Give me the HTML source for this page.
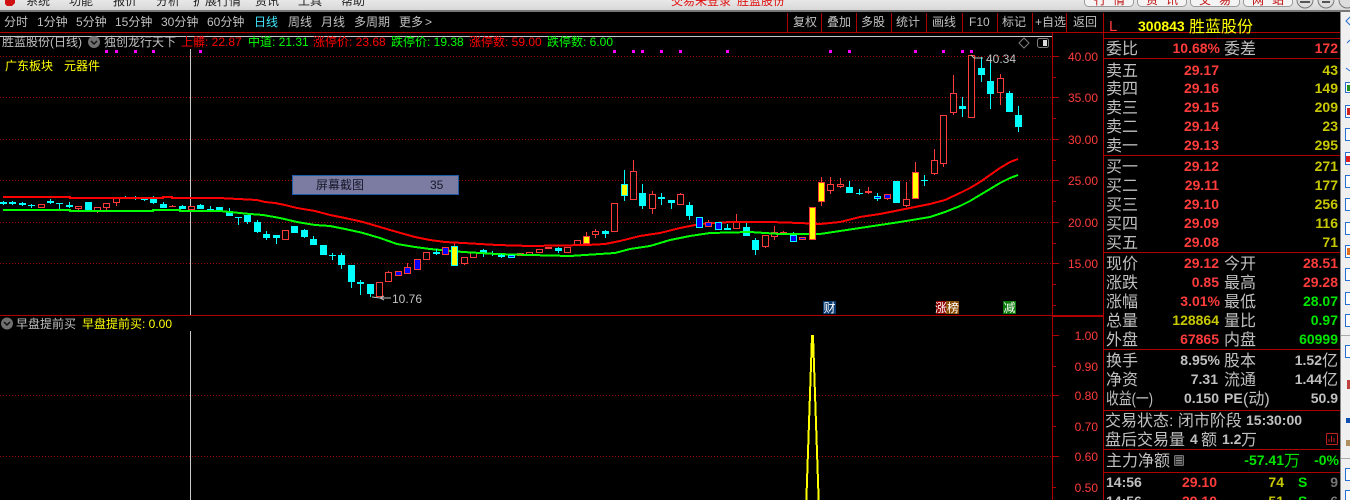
<!DOCTYPE html>
<html><head><meta charset="utf-8"><style>
html,body{margin:0;padding:0;background:#000;width:1350px;height:500px;overflow:hidden}
svg{display:block}
text{font-family:"Liberation Sans","WenQuanYi Zen Hei","Noto Sans CJK SC",sans-serif}
.m{font-size:12px;fill:#222}
.t{font-size:12px;fill:#c0c0c0}
.a{font-size:12px;fill:#ff3c3c;text-anchor:end}
.l{font-size:16px;fill:#c0c0c0}
.n{font-size:14px;font-weight:bold;fill:#ff3c3c;text-anchor:end}
.y{fill:#c8c800}.g{fill:#00e600}.w{fill:#c0c0c0}
.s{font-size:12px}
</style></head><body>
<svg width="1350" height="500" viewBox="0 0 1350 500" xmlns="http://www.w3.org/2000/svg">
<rect width="1350" height="500" fill="#000"/>
<!-- title bar -->
<defs><linearGradient id="tb" x1="0" y1="0" x2="0" y2="1"><stop offset="0" stop-color="#e8e8e8"/><stop offset="1" stop-color="#d8d8d8"/></linearGradient></defs>
<rect width="1350" height="10" fill="url(#tb)"/>
<rect y="10" width="1350" height="2" fill="#777"/>
<path d="M5 0h10v3l-3 3H7L5 4z" fill="#d01010"/>
<g class="m">
<text x="26" y="5" class="m">系统</text><text x="69" y="5" class="m">功能</text><text x="113" y="5" class="m">报价</text><text x="156" y="5" class="m">分析</text><text x="193" y="5" class="m">扩展行情</text><text x="255" y="5" class="m">资讯</text><text x="298" y="5" class="m">工具</text><text x="341" y="5" class="m">帮助</text>
</g>
<text x="671" y="5" font-size="12" fill="#e01010">交易未登录</text><text x="737" y="5" font-size="12" fill="#e01010">胜蓝股份</text>
<g fill="#f4f4f4" stroke="#999">
<rect x="1084.5" y="-6.5" width="49" height="13" rx="4"/><rect x="1137.5" y="-6.5" width="49" height="13" rx="4"/><rect x="1190.5" y="-6.5" width="49" height="13" rx="4"/><rect x="1243.5" y="-6.5" width="49" height="13" rx="4"/>
</g>
<g font-size="12" fill="#c01010"><text x="1094" y="4">行</text><text x="1113" y="4">情</text><text x="1146" y="4">资</text><text x="1166" y="4">讯</text><text x="1199" y="4">交</text><text x="1219" y="4">易</text><text x="1252" y="4">网</text><text x="1272" y="4">站</text></g>
<g fill="#ddd" stroke="#777"><circle cx="1305" cy="0" r="8"/><circle cx="1326" cy="0" r="8"/><circle cx="1347" cy="0" r="8"/></g>
<path d="M1300 2h10M1322 2h8" stroke="#555" stroke-width="2"/>

<!-- toolbar -->
<g class="t">
<text x="4" y="26" class="t">分时</text><text x="37" y="26" class="t">1分钟</text><text x="76" y="26" class="t">5分钟</text><text x="115" y="26" class="t">15分钟</text><text x="161" y="26" class="t">30分钟</text><text x="207" y="26" class="t">60分钟</text><text x="254" y="26" style="font-size:12px;fill:#40e8ff">日线</text><text x="288" y="26" class="t">周线</text><text x="321" y="26" class="t">月线</text><text x="354" y="26" class="t">多周期</text><text x="399" y="26" class="t">更多</text><text x="425" y="26" class="t">&gt;</text>
<text x="793" y="26" class="t">复权</text><text x="827" y="26" class="t">叠加</text><text x="861" y="26" class="t">多股</text><text x="896" y="26" class="t">统计</text><text x="932" y="26" class="t">画线</text><text x="969" y="26" class="t">F10</text><text x="1002" y="26" class="t">标记</text><text x="1035" y="26" class="t">+自选</text><text x="1073" y="26" class="t">返回</text>
</g>
<path d="M787.5 13V32M821.5 13V32M856.5 13V32M891.5 13V32M926.5 13V32M962.5 13V32M997.5 13V32M1032.5 13V32M1066.5 13V32M1103.5 13V500" stroke="#b00000" fill="none" shape-rendering="crispEdges"/>
<rect y="32" width="1341" height="1" fill="#b00000"/>
<rect y="36" width="1052" height="1" fill="#c8c8c8"/>

<!-- dotted grids -->
<g stroke="#a00000" stroke-dasharray="1 2" shape-rendering="crispEdges">
<path d="M0 56.5H1052M0 97.5H1052M0 139.5H1052M0 180.5H1052M0 222.5H1052M0 263.5H1052M0 395.5H1052M0 456.5H1052"/>
</g>
<!-- magenta dots -->
<path fill="#ff00ff" d="M105 50h3v3h-3zM115 50h3v3h-3zM134 50h3v3h-3zM152 50h3v3h-3zM199 50h3v3h-3zM613 50h3v3h-3zM632 50h3v3h-3zM641 50h3v3h-3zM660 50h3v3h-3zM679 50h3v3h-3zM726 50h3v3h-3zM829 50h3v3h-3zM848 50h3v3h-3zM914 50h3v3h-3zM942 50h3v3h-3zM961 50h3v3h-3zM970 50h3v3h-3z"/>
<!-- crosshair -->
<path d="M190.5 49V316M190.5 331V500" stroke="#c8c8c8" shape-rendering="crispEdges"/>

<g shape-rendering="crispEdges">
<!-- cyan wicks -->
<path fill="none" stroke="#00ffff" d="M3.5 201V205M12.5 201V205M22.5 202V206M31.5 204V208M50.5 199V204M59.5 203V209M69.5 202V208M125.5 196V199M135.5 196V200M144.5 199V201M153.5 196V204M163.5 202V208M182.5 205V209M200.5 204V209M210.5 206V212M229.5 208V216M238.5 217V225M247.5 215V224M257.5 220V233M266.5 231V240M276.5 235V244M304.5 229V238M313.5 236V245M332.5 253V260M341.5 253V269M351.5 265V288M360.5 280V295M370.5 284V297M483.5 249V257M492.5 251V256M558.5 247V253M605.5 230V238M624.5 170V201M642.5 184V209M661.5 193V205M671.5 200V209M689.5 202V220M727.5 224V229M746.5 223V236M755.5 238V255M793.5 232V236M859.5 189V195M849.5 181V193M877.5 193V201M924.5 175V186M962.5 97V117M981.5 57V82M990.5 58V109M1009.5 91V112M1018.5 106V132"/>
<!-- red wicks -->
<path fill="none" stroke="#ff3c3c" d="M78.5 209V210M97.5 212V213M106.5 208V210M116.5 203V206M172.5 205V207M388.5 271V272M407.5 263V267M464.5 264V265M586.5 232V236M595.5 229V238M633.5 160V171M652.5 191V214M680.5 193V194M708.5 220V222M736.5 214V222M765.5 247V248M774.5 226V240M783.5 231V234M830.5 177V194M840.5 178V188M868.5 187V194M887.5 198V200M906.5 182V207M915.5 162V172M934.5 149V175M943.5 164V167M953.5 75V115M1000.5 74V105M821.5 177V206M454.5 243V246"/>
<!-- cyan bodies -->
<path fill="#00ffff" d="M0 202h7v2h-7zM9 202h7v2h-7zM19 203h7v2h-7zM28 205h7v1h-7zM47 201h7v2h-7zM56 203h7v1h-7zM66 205h7v2h-7zM85 202h7v8h-7zM141 199h7v1h-7zM150 199h7v4h-7zM160 204h7v4h-7zM179 206h7v3h-7zM197 205h7v4h-7zM207 209h7v1h-7zM216 207h7v4h-7zM226 211h7v5h-7zM235 217h7v1h-7zM244 215h7v7h-7zM254 222h7v10h-7zM263 234h7v4h-7zM273 235h7v3h-7zM291 226h7v7h-7zM301 230h7v7h-7zM310 239h7v6h-7zM320 245h7v10h-7zM329 255h7v1h-7zM338 255h7v10h-7zM348 265h7v17h-7zM357 282h7v2h-7zM367 284h7v10h-7zM480 250h7v3h-7zM489 253h7v1h-7zM555 248h7v3h-7zM602 231h7v3h-7zM639 193h7v13h-7zM658 197h7v2h-7zM668 200h7v3h-7zM686 205h7v11h-7zM743 227h7v9h-7zM752 240h7v10h-7zM846 187h7v6h-7zM856 193h7v1h-7zM893 181h7v22h-7zM921 180h7v1h-7zM959 106h7v3h-7zM978 68h7v7h-7zM987 81h7v13h-7zM1006 93h7v19h-7zM1015 115h7v12h-7z"/>
<!-- red hollow -->
<path fill="#000" stroke="#ff3c3c" d="M38.5 204.500h6v3h-6zM75.500 206.500h6v2h-6zM94.500 207.500h6v4h-6zM103.500 203.500h6v4h-6zM113.500 198.500h6v4h-6zM188.500 206.500h6v3h-6zM282.500 230.500h6v9h-6zM376.500 282.500h6v14h-6zM385.500 272.500h6v9h-6zM423.500 252.500h6v7h-6zM461.500 257.500h6v6h-6zM470.500 252.500h6v5h-6zM526.500 252.500h6v3h-6zM536.500 249.500h6v3h-6zM564.500 247.500h6v5h-6zM574.500 240.500h6v4h-6zM592.500 231.500h6v3h-6zM611.500 203.500h6v28h-6zM630.500 171.500h6v28h-6zM649.500 194.500h6v14h-6zM677.500 194.500h6v10h-6zM733.500 222.500h6v6h-6zM762.500 235.500h6v11h-6zM771.500 232.500h6v4h-6zM827.500 184.500h6v6h-6zM837.500 184.500h6v2h-6zM903.500 199.500h6v6h-6zM931.500 160.500h6v13h-6zM940.500 115.500h6v48h-6zM950.500 93.500h6v19h-6zM968.500 55.500h6v62h-6zM997.500 78.500h6v14h-6z"/>
<!-- red solid -->
<path fill="#ff3c3c" d="M169 206h7v1h-7zM517 253h7v3h-7zM545 247h7v2h-7zM780 232h7v1h-7zM865 191h7v2h-7z"/>
</g>

<!-- MA lines -->
<polyline fill="none" stroke="#ff0000" stroke-width="2" shape-rendering="crispEdges" points="3,197 70,197 70,198 163,198 163,197 172,197 172,198 219,198 238,199 257,200 265,202 275,203 285,205 297,208 315,211 330,215 345,218 363,222 380,227 397,232 415,237 430,240 445,242 463,243 497,245 530,246 587,245 605,244 620,241 640,236 660,233 680,228 690,226 700,224 730,222 770,222 800,223 820,224 840,222 860,217 880,214 900,210 930,204 945,200 960,193 970,188 980,182 990,175 1000,168 1010,162 1018,159"/>
<polyline fill="none" stroke="#00ff00" stroke-width="2" shape-rendering="crispEdges" points="3,210 70,210 70,211 153,211 153,210 180,210 180,211 220,211 230,212 250,214 263,215 280,218 297,222 315,225 330,226 345,229 363,233 380,238 397,244 415,247 430,249 463,252 497,254 530,255 570,256 600,254 615,253 630,249 650,246 670,240 690,236 710,233 750,232 780,234 820,234 840,231 860,228 880,225 900,222 930,217 945,212 960,206 970,201 980,195 990,189 1000,183 1010,178 1018,175"/>

<!-- overlays blue / yellow -->
<g shape-rendering="crispEdges" stroke-width="1">
<path fill="none" stroke="#00ffff" d="M436.500 249V255M501.500 254V258"/>
<g fill="#0000ff" stroke="#ff3c3c">
<rect x="395.500" y="271.500" width="6" height="4"/><rect x="404.500" y="267.500" width="6" height="6"/><rect x="414.500" y="259.500" width="6" height="10"/><rect x="442.500" y="247.500" width="6" height="7"/><rect x="705.500" y="222.500" width="6" height="4"/><rect x="799.500" y="237.500" width="6" height="2"/><rect x="884.500" y="194.500" width="6" height="4"/>
</g>
<g fill="#0000ff" stroke="#00ffff">
<rect x="433.500" y="252.500" width="6" height="1"/><rect x="498.500" y="255.500" width="6" height="1"/><rect x="508.500" y="255.500" width="6" height="2"/><rect x="696.500" y="217.500" width="6" height="10"/><rect x="715.500" y="222.500" width="6" height="7"/><rect x="724.500" y="228.500" width="6" height="1"/><rect x="790.500" y="235.500" width="6" height="6"/><rect x="874.500" y="196.500" width="6" height="2"/>
</g>
<g fill="#ffff00" stroke="#ff3c3c">
<rect x="583.500" y="236.500" width="6" height="7"/><rect x="809.500" y="207.500" width="6" height="32"/><rect x="818.500" y="182.500" width="6" height="19"/><rect x="912.500" y="172.500" width="6" height="26"/>
</g>
<g fill="#ffff00" stroke="#00ffff">
<rect x="451.500" y="246.500" width="6" height="19"/><rect x="621.500" y="184.500" width="6" height="11"/>
</g>
</g>

<!-- price labels -->
<path d="M372 297l8 1M380 298h11M380 298l4-2M380 298l4 2" stroke="#c0c0c0" fill="none"/>
<text x="392" y="303" font-size="12" fill="#c0c0c0">10.76</text>
<path d="M971 55l3 3h9" stroke="#c0c0c0" fill="none"/>
<text x="986" y="63" font-size="12" fill="#c0c0c0">40.34</text>

<!-- legend -->
<text x="2" y="46" class="t">胜蓝股份(日线)</text>
<circle cx="94" cy="42" r="6" fill="#707070"/><path d="M91 41l3 3 3-3" stroke="#111" stroke-width="1.500" fill="none"/>
<text x="104" y="46" class="t">独创龙行天下</text>
<text x="181" y="46" font-size="12" fill="#ff0000">上髒: 22.87</text>
<text x="248" y="46" font-size="12" fill="#00ff00">中道: 21.31</text>
<text x="313" y="46" font-size="12" fill="#ff0000">涨停价: 23.68</text>
<text x="391" y="46" font-size="12" fill="#00ff00">跌停价: 19.38</text>
<text x="469" y="46" font-size="12" fill="#ff0000">涨停数: 59.00</text>
<text x="547" y="46" font-size="12" fill="#00ff00">跌停数: 6.00</text>
<text x="5" y="70" font-size="12" fill="#ffff00">广东板块</text>
<text x="64" y="70" font-size="12" fill="#ffff00">元器件</text>
<path d="M1024 38l5 5-5 5-5-5z" stroke="#808080" fill="none"/>
<rect x="1037.500" y="38.500" width="11" height="9" rx="2" stroke="#808080" fill="none"/><rect x="1043" y="40" width="4" height="6" fill="#ddd"/>

<!-- tooltip -->
<rect x="292.500" y="175.500" width="166" height="19" fill="#7c7ca2" stroke="#1a5ca8"/>
<text x="316" y="189" font-size="12" fill="#161628">屏幕截图</text>
<text x="430" y="189" font-size="12" fill="#161628">35</text>

<!-- axes -->
<rect x="1052" y="33" width="1" height="467" fill="#b00000"/>
<rect y="315" width="1103" height="1" fill="#b00000"/>
<rect x="1053" y="316" width="50" height="1" fill="#b00000"/>
<path stroke="#b00000" shape-rendering="crispEdges" d="M1053 56.500h6M1053 77.500h3M1053 97.500h6M1053 118.500h3M1053 139.500h6M1053 160.500h3M1053 180.500h6M1053 201.500h3M1053 222.500h6M1053 243.500h3M1053 263.500h6M1053 284.500h3M1053 305.500h3M1053 335.500h6M1053 366.500h3M1053 395.500h6M1053 426.500h3M1053 456.500h6M1053 487.500h3"/>
<g class="a">
<text x="1098" y="61" class="a">40.00</text><text x="1098" y="102" class="a">35.00</text><text x="1098" y="144" class="a">30.00</text><text x="1098" y="185" class="a">25.00</text><text x="1098" y="227" class="a">20.00</text><text x="1098" y="268" class="a">15.00</text>
<text x="1098" y="340" class="a">1.00</text><text x="1098" y="371" class="a">0.90</text><text x="1098" y="400" class="a">0.80</text><text x="1098" y="431" class="a">0.70</text><text x="1098" y="461" class="a">0.60</text><text x="1098" y="492" class="a">0.50</text>
</g>

<!-- event marks -->
<rect x="823" y="301" width="13" height="13" fill="#0a3a70"/><text x="823.500" y="312" font-size="12" fill="#fff">财</text>
<rect x="936" y="301" width="10" height="13" fill="#900000"/><rect x="946" y="301" width="13" height="13" fill="#8a4a00"/><text x="935" y="312" font-size="12" fill="#fff">涨</text><text x="947" y="312" font-size="12" fill="#fff">榜</text>
<rect x="1003" y="301" width="13" height="13" fill="#0a7a0a"/><text x="1003.500" y="312" font-size="12" fill="#fff">减</text>

<!-- lower pane -->
<circle cx="7" cy="323.500" r="6" fill="#707070"/><path d="M4 322l3 3 3-3" stroke="#111" stroke-width="1.500" fill="none"/>
<text x="16" y="328" class="t">早盘提前买</text>
<text x="82" y="328" font-size="12" fill="#ffff00">早盘提前买: 0.00</text>
<polyline fill="none" stroke="#ffff00" stroke-width="2" shape-rendering="crispEdges" points="806,510 812,336 813,336 819,510"/>

<!-- right panel -->
<text x="1109" y="31" font-size="15" fill="#ff3c3c">L</text>
<text x="1138" y="31" font-size="14" font-weight="bold" fill="#ffff00">300843</text>
<text x="1189" y="32" font-size="16" fill="#ffff00">胜蓝股份</text>
<path stroke="#b00000" stroke-width="1" shape-rendering="crispEdges" d="M1103 38.500H1341M1103 58.500H1341M1103 155.500H1341M1103 252.500H1341M1103 349.500H1341M1103 410.500H1341M1103 449.500H1341M1103 472.500H1341"/>
<text x="1106" y="54" class="l">委比</text><text x="1220" y="53" class="n">10.68%</text><text x="1224" y="54" class="l">委差</text><text x="1338" y="53" class="n">172</text>

<text x="1106" y="76" class="l">卖五</text><text x="1219" y="75" class="n">29.17</text><text x="1338" y="75" class="n y">43</text>
<text x="1106" y="94" class="l">卖四</text><text x="1219" y="93" class="n">29.16</text><text x="1338" y="93" class="n y">149</text>
<text x="1106" y="113" class="l">卖三</text><text x="1219" y="112" class="n">29.15</text><text x="1338" y="112" class="n y">209</text>
<text x="1106" y="132" class="l">卖二</text><text x="1219" y="131" class="n">29.14</text><text x="1338" y="131" class="n y">23</text>
<text x="1106" y="151" class="l">卖一</text><text x="1219" y="150" class="n">29.13</text><text x="1338" y="150" class="n y">295</text>

<text x="1106" y="172" class="l">买一</text><text x="1219" y="171" class="n">29.12</text><text x="1338" y="171" class="n y">271</text>
<text x="1106" y="191" class="l">买二</text><text x="1219" y="190" class="n">29.11</text><text x="1338" y="190" class="n y">177</text>
<text x="1106" y="210" class="l">买三</text><text x="1219" y="209" class="n">29.10</text><text x="1338" y="209" class="n y">256</text>
<text x="1106" y="229" class="l">买四</text><text x="1219" y="228" class="n">29.09</text><text x="1338" y="228" class="n y">116</text>
<text x="1106" y="248" class="l">买五</text><text x="1219" y="247" class="n">29.08</text><text x="1338" y="247" class="n y">71</text>

<text x="1106" y="269" class="l">现价</text><text x="1219" y="268" class="n">29.12</text><text x="1224" y="269" class="l">今开</text><text x="1338" y="268" class="n">28.51</text>
<text x="1106" y="288" class="l">涨跌</text><text x="1219" y="287" class="n">0.85</text><text x="1224" y="288" class="l">最高</text><text x="1338" y="287" class="n">29.28</text>
<text x="1106" y="307" class="l">涨幅</text><text x="1220" y="306" class="n">3.01%</text><text x="1224" y="307" class="l">最低</text><text x="1338" y="306" class="n g">28.07</text>
<text x="1106" y="326" class="l">总量</text><text x="1219" y="325" class="n y">128864</text><text x="1224" y="326" class="l">量比</text><text x="1338" y="325" class="n g">0.97</text>
<text x="1106" y="345" class="l">外盘</text><text x="1219" y="344" class="n">67865</text><text x="1224" y="345" class="l">内盘</text><text x="1338" y="344" class="n g">60999</text>

<text x="1106" y="366" class="l">换手</text><text x="1220" y="365" class="n w">8.95%</text><text x="1224" y="366" class="l">股本</text><text x="1322" y="365" class="n w">1.52</text><text x="1322" y="366" class="l">亿</text>
<text x="1106" y="385" class="l">净资</text><text x="1218" y="384" class="n w">7.31</text><text x="1224" y="385" class="l">流通</text><text x="1322" y="384" class="n w">1.44</text><text x="1322" y="385" class="l">亿</text>
<text x="1106" y="404" class="l" textLength="47" lengthAdjust="spacingAndGlyphs">收益(一)</text><text x="1219" y="403" class="n w">0.150</text><text x="1224" y="403" style="font-size:14px;font-weight:bold;fill:#c0c0c0">PE</text><text x="1243" y="404" class="l">(动)</text><text x="1338" y="403" class="n w">50.9</text>

<text x="1105" y="426" class="l">交易状态: 闭市阶段</text><text x="1246" y="425" font-size="14" font-weight="bold" fill="#c0c0c0">15:30:00</text>
<text x="1105" y="445" class="l">盘后交易量</text><text x="1190" y="444" font-size="14" font-weight="bold" fill="#c0c0c0">4</text><text x="1201" y="445" class="l">额</text><text x="1222" y="444" font-size="14" font-weight="bold" fill="#c0c0c0">1.2</text><text x="1241" y="445" class="l">万</text>
<rect x="1326.500" y="433.500" width="11" height="11" rx="1" fill="none" stroke="#c02020"/><path d="M1329 442v-3M1331.500 442v-6M1334 442v-4" stroke="#c02020"/>
<text x="1106" y="466" class="l">主力净额</text>
<rect x="1174.500" y="455.500" width="9" height="10" rx="1" fill="#333" stroke="#777"/><path d="M1176 458h6M1176 460.500h6M1176 463h6" stroke="#999"/>
<text x="1284" y="465" class="n g">-57.41</text><text x="1284" y="466" font-size="16" fill="#00e600">万</text><text x="1339" y="465" class="n g">-0%</text>

<text x="1106" y="487" font-size="14" font-weight="bold" fill="#c0c0c0">14:56</text><text x="1217" y="487" class="n">29.10</text><text x="1284" y="487" class="n y">74</text><text x="1298" y="487" font-size="14" font-weight="bold" fill="#00e600">S</text><text x="1338" y="487" class="n" style="fill:#777">9</text>
<text x="1106" y="506" font-size="14" font-weight="bold" fill="#c0c0c0">14:56</text><text x="1217" y="506" class="n">29.10</text><text x="1284" y="506" class="n y">51</text><text x="1298" y="506" font-size="14" font-weight="bold" fill="#00e600">S</text><text x="1338" y="506" class="n" style="fill:#777">6</text>

<!-- right strip -->
<rect x="1340" y="12" width="1" height="488" fill="#888"/>
<rect x="1341" y="12" width="9" height="488" fill="#f0f0f0"/>
<g fill="#fff" stroke="#2a6fd0" shape-rendering="crispEdges">
<rect x="1345.500" y="82.500" width="8" height="10"/><rect x="1345.500" y="105.500" width="8" height="12"/><rect x="1345.500" y="128.500" width="8" height="12"/><rect x="1345.500" y="152.500" width="8" height="12"/><rect x="1345.500" y="175.500" width="8" height="12"/><rect x="1345.500" y="198.500" width="8" height="12"/><rect x="1345.500" y="222.500" width="8" height="12"/><rect x="1345.500" y="245.500" width="8" height="12"/><rect x="1345.500" y="268.500" width="8" height="12"/><rect x="1345.500" y="292.500" width="8" height="12"/><rect x="1345.500" y="314.500" width="8" height="12"/><rect x="1345.500" y="345.500" width="8" height="12"/><rect x="1345.500" y="468.500" width="8" height="12"/><rect x="1345.500" y="490.500" width="8" height="12"/>
</g>
<path d="M1350 17l-4 4 4 4M1350 40l-3 3M1346 68l4 3" stroke="#2a6fd0" fill="none"/>
<rect x="1341" y="335" width="9" height="1" fill="#aaa"/><rect x="1341" y="458" width="9" height="1" fill="#aaa"/>
<rect x="1347" y="85" width="3" height="6" fill="#209020"/><rect x="1347" y="108" width="3" height="7" fill="#d02020"/><rect x="1346" y="156" width="4" height="6" fill="#e02020"/><rect x="1347" y="248" width="3" height="7" fill="#e07020"/>
<rect x="1347" y="380" width="3" height="9" fill="#c04040"/><rect x="1346" y="418" width="4" height="5" fill="#1050b0"/><rect x="1346" y="440" width="4" height="6" fill="#b09060"/>
</svg>
</body></html>
